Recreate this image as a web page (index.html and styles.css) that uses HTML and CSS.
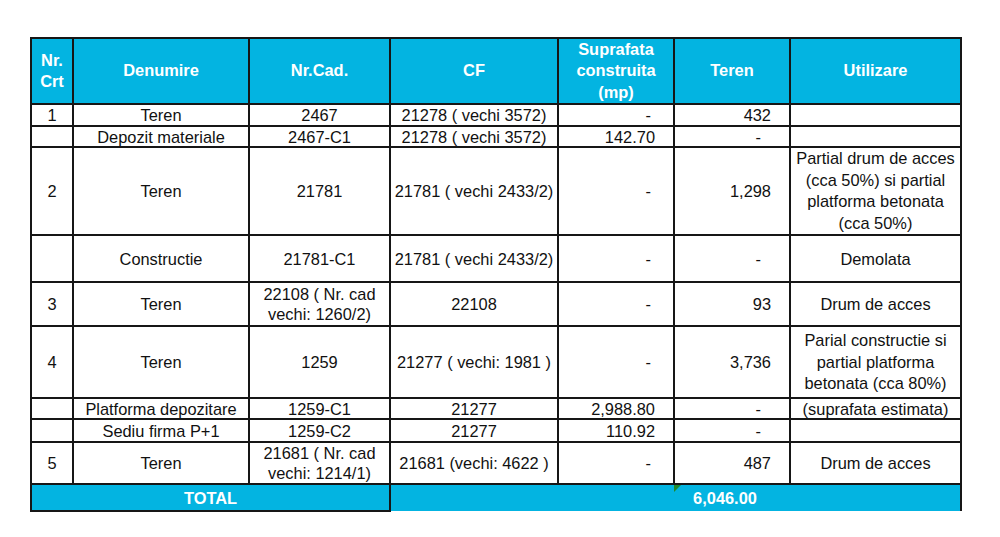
FILE: index.html
```html
<!DOCTYPE html>
<html lang="ro">
<head>
<meta charset="utf-8">
<title>Tabel imobile</title>
<link rel="stylesheet" href="styles.css">
</head>
<body>
<div class="page">
<table class="grid">
  <colgroup>
    <col class="c-nr">
    <col class="c-den">
    <col class="c-cad">
    <col class="c-cf">
    <col class="c-sup">
    <col class="c-ter">
    <col class="c-uti">
  </colgroup>
  <thead>
    <tr class="r-head">
      <th>Nr.<br>Crt</th>
      <th>Denumire</th>
      <th>Nr.Cad.</th>
      <th>CF</th>
      <th>Suprafata<br>construita<br>(mp)</th>
      <th>Teren</th>
      <th>Utilizare</th>
    </tr>
  </thead>
  <tbody>
    <tr class="r-22">
      <td>1</td><td>Teren</td><td>2467</td><td>21278 ( vechi 3572)</td>
      <td class="num-s dash-s">-</td><td class="num-t">432</td><td></td>
    </tr>
    <tr class="r-21">
      <td></td><td>Depozit materiale</td><td>2467-C1</td><td>21278 ( vechi 3572)</td>
      <td class="num-s">142.70</td><td class="num-t dash-t">-</td><td></td>
    </tr>
    <tr class="r-88">
      <td>2</td><td>Teren</td><td>21781</td><td>21781 ( vechi 2433/2)</td>
      <td class="num-s dash-s">-</td><td class="num-t">1,298</td>
      <td class="multi">Partial drum de acces<br>(cca 50%) si partial<br>platforma betonata<br>(cca 50%)</td>
    </tr>
    <tr class="r-47">
      <td></td><td>Constructie</td><td>21781-C1</td><td>21781 ( vechi 2433/2)</td>
      <td class="num-s dash-s">-</td><td class="num-t dash-t">-</td><td>Demolata</td>
    </tr>
    <tr class="r-44">
      <td>3</td><td>Teren</td><td class="two">22108 ( Nr. cad<br>vechi: 1260/2)</td><td>22108</td>
      <td class="num-s dash-s">-</td><td class="num-t">93</td><td>Drum de acces</td>
    </tr>
    <tr class="r-72">
      <td>4</td><td>Teren</td><td>1259</td><td>21277 ( vechi: 1981 )</td>
      <td class="num-s dash-s">-</td><td class="num-t">3,736</td>
      <td class="multi">Parial constructie si<br>partial platforma<br>betonata (cca 80%)</td>
    </tr>
    <tr class="r-21">
      <td></td><td>Platforma depozitare</td><td>1259-C1</td><td>21277</td>
      <td class="num-s">2,988.80</td><td class="num-t dash-t">-</td><td>(suprafata estimata)</td>
    </tr>
    <tr class="r-23">
      <td></td><td>Sediu firma P+1</td><td>1259-C2</td><td>21277</td>
      <td class="num-s">110.92</td><td class="num-t dash-t">-</td><td></td>
    </tr>
    <tr class="r-42">
      <td>5</td><td>Teren</td><td class="two">21681 ( Nr. cad<br>vechi: 1214/1)</td><td>21681 (vechi: 4622 )</td>
      <td class="num-s dash-s">-</td><td class="num-t">487</td><td>Drum de acces</td>
    </tr>
  </tbody>
  <tfoot>
    <tr class="r-total">
      <td colspan="3" class="total-label">TOTAL</td>
      <td colspan="2" class="total-fill total-first"></td>
      <td class="total-fill total-value"><span class="flag"></span>6,046.00</td>
      <td class="total-fill total-last"></td>
    </tr>
  </tfoot>
</table>
</div>
</body>
</html>
```
FILE: styles.css
```css
html, body {
  margin: 0;
  padding: 0;
  background: #ffffff;
}

.page {
  padding: 37px 0 0 30px;
}

.grid {
  border-collapse: collapse;
  table-layout: fixed;
  width: 930px;
  font-family: "Liberation Sans", Arial, sans-serif;
  font-size: 16.4px;
  line-height: 18px;
  color: #111111;
}

.c-nr  { width: 42px; }
.c-den { width: 176px; }
.c-cad { width: 141px; }
.c-cf  { width: 168px; }
.c-sup { width: 116px; }
.c-ter { width: 116px; }
.c-uti { width: 171px; }

.grid th,
.grid td {
  border: 2px solid #161616;
  padding: 0 2px;
  text-align: center;
  vertical-align: middle;
  white-space: nowrap;
  overflow: visible;
}

.grid th {
  background: #03b4e1;
  color: #ffffff;
  font-weight: bold;
  line-height: 21.3px;
}

.grid td.multi { line-height: 21.6px; }
.grid td.two { line-height: 20px; }

.r-head { height: 66px; }
.r-22 { height: 22px; }
.r-21 { height: 21px; }
.r-23 { height: 23px; }
.r-88 { height: 88px; }
.r-47 { height: 47px; }
.r-44 { height: 44px; }
.r-72 { height: 72px; }
.r-42 { height: 42px; }
.r-total { height: 27px; }

.grid td.num-s {
  text-align: right;
  padding-right: 18px;
}

.grid td.num-t {
  text-align: right;
  padding-right: 18px;
}

.grid td.dash-s { padding-right: 22px; }
.grid td.dash-t { padding-right: 28px; }

.grid td.total-label {
  background: #03b4e1;
  color: #ffffff;
  font-weight: bold;
}

.grid td.total-fill {
  background: #03b4e1;
  color: #ffffff;
  font-weight: bold;
  border-bottom: none;
  border-left: none;
  border-right: none;
}

.grid td.total-first {
  border-left: 2px solid #161616;
}

.grid td.total-last {
  border-right: 2px solid #161616;
}

.grid td.total-value {
  position: relative;
  padding-right: 16px;
}

.flag {
  position: absolute;
  left: 0;
  top: 0;
  width: 0;
  height: 0;
  border-top: 7px solid #1f8a2c;
  border-right: 7px solid transparent;
}
```
